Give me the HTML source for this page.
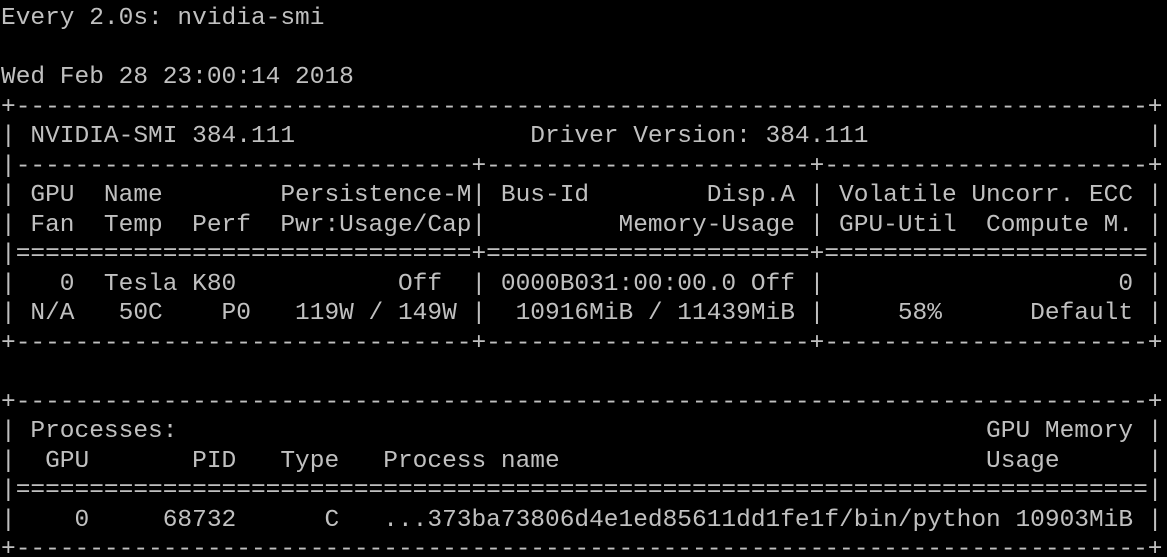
<!DOCTYPE html>
<html><head><meta charset="utf-8"><style>
html,body{margin:0;padding:0;background:#000;width:1167px;height:557px;overflow:hidden}
pre{margin:0;padding:4px 0 0 1px;font-family:"Liberation Mono",monospace;font-size:24.5px;line-height:29.5px;color:#c0c0c0;white-space:pre}
</style></head><body><pre>Every 2.0s: nvidia-smi

Wed Feb 28 23:00:14 2018
+-----------------------------------------------------------------------------+
| NVIDIA-SMI 384.111                Driver Version: 384.111                   |
|-------------------------------+----------------------+----------------------+
| GPU  Name        Persistence-M| Bus-Id        Disp.A | Volatile Uncorr. ECC |
| Fan  Temp  Perf  Pwr:Usage/Cap|         Memory-Usage | GPU-Util  Compute M. |
|===============================+======================+======================|
|   0  Tesla K80           Off  | 0000B031:00:00.0 Off |                    0 |
| N/A   50C    P0   119W / 149W |  10916MiB / 11439MiB |     58%      Default |
+-------------------------------+----------------------+----------------------+

+-----------------------------------------------------------------------------+
| Processes:                                                       GPU Memory |
|  GPU       PID   Type   Process name                             Usage      |
|=============================================================================|
|    0     68732      C   ...373ba73806d4e1ed85611dd1fe1f/bin/python 10903MiB |
+-----------------------------------------------------------------------------+</pre></body></html>
